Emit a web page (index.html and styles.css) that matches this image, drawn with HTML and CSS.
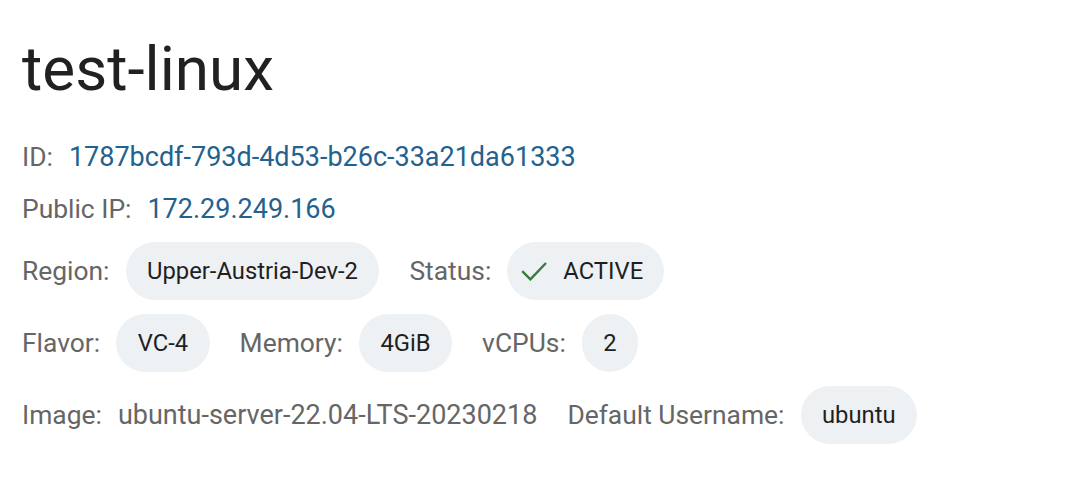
FILE: index.html
```html
<!DOCTYPE html>
<html>
<head>
<meta charset="utf-8">
<link rel="stylesheet" href="styles.css">
</head>
<body>
<div class="page">
  <h1 class="title">test-linux</h1>
  <div class="row line">
    <span class="group"><span class="label">ID:</span><span class="value link">1787bcdf-793d-4d53-b26c-33a21da61333</span></span>
  </div>
  <div class="row line">
    <span class="group"><span class="label">Public IP:</span><span class="value link">172.29.249.166</span></span>
  </div>
  <div class="row">
    <span class="group"><span class="label">Region:</span><span class="chip">Upper-Austria-Dev-2</span></span>
    <span class="group"><span class="label">Status:</span><span class="chip chip-icon"><svg class="check" viewBox="0 0 26 20" width="26" height="20"><path d="M1.2 10.2 L9.4 18.4 L25 2" fill="none" stroke="#3b7a3f" stroke-width="2.4"/></svg>ACTIVE</span></span>
  </div>
  <div class="row">
    <span class="group"><span class="label">Flavor:</span><span class="chip">VC-4</span></span>
    <span class="group"><span class="label">Memory:</span><span class="chip">4GiB</span></span>
    <span class="group"><span class="label">vCPUs:</span><span class="chip">2</span></span>
  </div>
  <div class="row">
    <span class="group"><span class="label">Image:</span><span class="value plain">ubuntu-server-22.04-LTS-20230218</span></span>
    <span class="group"><span class="label">Default Username:</span><span class="chip">ubuntu</span></span>
  </div>
</div>
</body>
</html>
```
FILE: styles.css
```css
html, body {
  margin: 0;
  padding: 0;
  background: #ffffff;
}
body {
  font-family: Roboto, "Liberation Sans", sans-serif;
  color: #212121;
}
.page {
  padding: 33px 22px 22px 22px;
}
.title {
  font-size: 62px;
  font-weight: 400;
  margin: 0 0 36px 0;
  line-height: 72px;
  color: #212121;
}
.row {
  display: flex;
  align-items: center;
  gap: 30px;
  min-height: 58px;
  margin-bottom: 14px;
}
.row.line {
  min-height: 32px;
  margin-bottom: 20px;
}
.row.line + .row:not(.line) {
  margin-top: -3px;
}
.group {
  display: flex;
  align-items: center;
  gap: 16px;
}
.label {
  color: #666666;
  font-size: 26.4px;
  line-height: 32px;
}
.value {
  font-size: 27px;
  line-height: 32px;
}
.link {
  color: #23628f;
}
.plain {
  color: #666666;
}
.chip {
  display: inline-flex;
  align-items: center;
  height: 58px;
  padding: 0 21.5px;
  border-radius: 29px;
  background: #eef1f4;
  color: #1f1f1f;
  font-size: 23.8px;
  box-sizing: border-box;
}
.chip-icon {
  padding-left: 14px;
  padding-right: 21px;
  gap: 16px;
}
.check {
  display: block;
}
```
